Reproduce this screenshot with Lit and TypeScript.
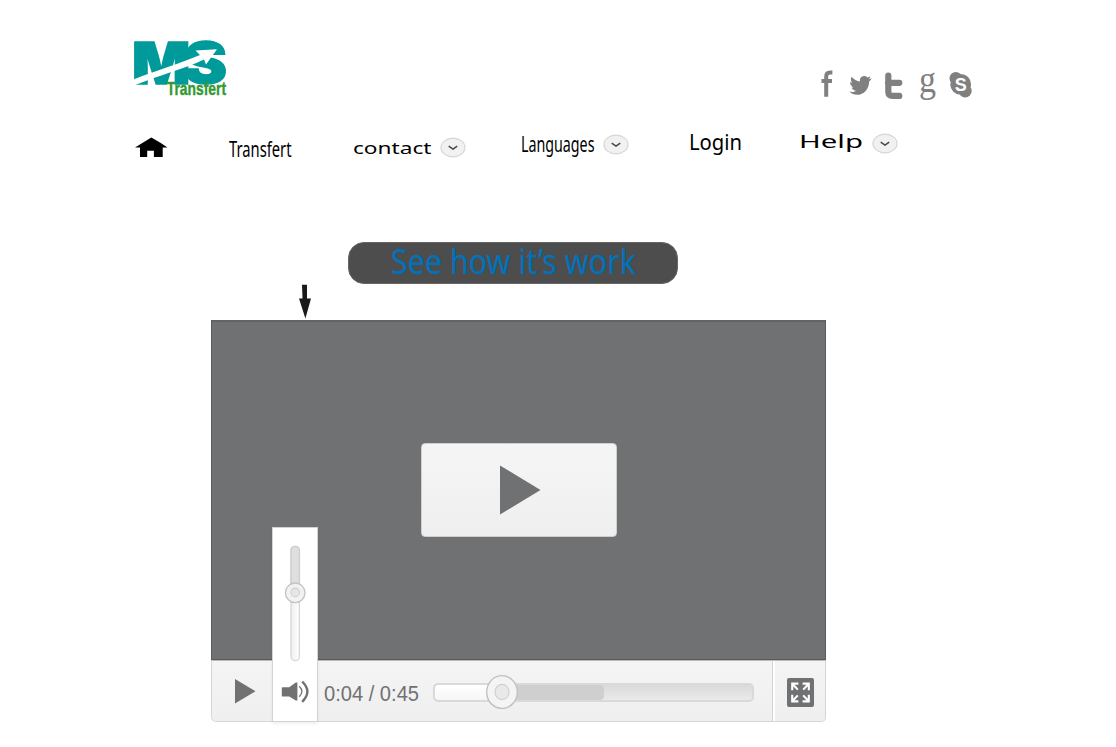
import { LitElement, html, css, svg } from "lit";
import { customElement, property } from "lit/decorators.js";

const chevron = html`<svg width="26" height="21" viewBox="0 0 26 21">
  <ellipse cx="13" cy="10.5" rx="12" ry="9.4" fill="#f1f1f1" stroke="#d6d6d6" stroke-width="1.2" />
  <path d="M8.7 9.2 L13 12.1 L17.2 9.2" fill="none" stroke="#444" stroke-width="1.4" />
</svg>`;

/** Text fitted to a given width, sitting on a given baseline. */
@customElement("fit-label")
class FitLabel extends LitElement {
  static styles = css`
    :host { display: block; }
    svg { display: block; overflow: visible; }
    text { font-family: var(--label-font, "Noto Sans", sans-serif); fill: currentColor; }
  `;
  @property() text = "";
  @property({ type: Number }) width = 60;
  @property({ type: Number }) height = 35;
  @property({ type: Number }) size = 22;
  @property({ type: Number }) baseline = 22;
  render() {
    return html`<svg width=${this.width} height=${this.height}>
      <text x="0" y=${this.baseline} font-size=${this.size} textLength=${this.width}
        lengthAdjust="spacingAndGlyphs">${this.text}</text>
    </svg>`;
  }
}

@customElement("brand-logo")
class BrandLogo extends LitElement {
  static styles = css`
    :host { display: block; }
    svg { display: block; overflow: visible; }
    .big { font-family: "Inter", "Liberation Sans", sans-serif; font-weight: 900; fill: #009a9a; stroke: #009a9a; stroke-width: 1.4; }
    .small { font-family: "Liberation Sans", sans-serif; font-weight: 700; fill: #339a33; stroke: #339a33; stroke-width: 0.4; }
  `;
  render() {
    return html`<svg width="100" height="64">
      <text class="big" x="2" y="48" font-size="57.5" textLength="58.5" lengthAdjust="spacingAndGlyphs">M</text>
      <text class="big" x="54" y="47.3" font-size="56" textLength="43" lengthAdjust="spacingAndGlyphs">S</text>
      <path d="M4 43.2 C28 34 50 27.5 70 19 L65.5 14.5 L87 13.3 L76 28.5 L74 23.5 C54 33 28 39.5 4 49.5 Z" fill="#fff" />
      <text class="small" x="36.8" y="59.2" font-size="17.8" textLength="59.2" lengthAdjust="spacingAndGlyphs">Transfert</text>
    </svg>`;
  }
}

@customElement("social-links")
class SocialLinks extends LitElement {
  static styles = css`
    :host { display: block; }
    svg { display: block; overflow: visible; }
    .serif { font-family: "Liberation Serif", serif; }
    .s { font-family: "Liberation Sans", sans-serif; font-weight: 700; fill: #fff; }
  `;
  render() {
    return html`<svg width="160" height="40" fill="#808080">
      <path d="M10.2 32.7 V12.5 Q10.2 8.4 14 8.4 H16.4 M5.5 17 H16" fill="none" stroke="#808080" stroke-width="4" />
      <path d="M33 27.3 C36 28.2 38 27.6 39.4 26.4 C36.8 26 35.7 24.8 35.2 23.2 L37 23.1 C34.6 21.8 33.6 20 33.7 17.7 L35.8 18.4 C34.2 16.5 34.2 14.2 35.1 12.4 C37.5 15.1 40.3 16.8 43.6 17.2 C43.1 14.2 44.7 12 47.6 11.8 C49 11.7 50.1 12.4 51 13.2 L54 12.1 C53.7 13.4 53 14.3 52.2 14.9 L55.2 14.2 C54.6 15.4 53.7 16.4 52.7 17.1 C52.7 24.6 47.6 30.5 40.6 30.5 C37.8 30.5 35 29.5 33 27.3 Z" transform="translate(.4 .3)" />
      <path d="M72.3 11.5 V27.5 Q72.3 31.9 76.5 31.9 H83.3 M72 18.8 H83.3" fill="none" stroke="#808080" stroke-width="6.2" stroke-linecap="round" />
      <text class="serif" x="103" y="28" font-size="38" textLength="17" lengthAdjust="spacingAndGlyphs">g</text>
      <circle cx="144.7" cy="20.4" r="10.4" />
      <circle cx="139.8" cy="14.3" r="6.3" />
      <circle cx="149.2" cy="27" r="6.5" />
      <text class="s" x="138.7" y="27" font-size="18.5" textLength="12" lengthAdjust="spacingAndGlyphs">S</text>
    </svg>`;
  }
}

@customElement("video-player")
class VideoPlayer extends LitElement {
  @property({ type: Number }) played = 21;
  @property({ type: Number }) loaded = 53.6;
  static styles = css`
    :host { display: block; position: relative; width: 615px; }
    * { box-sizing: border-box; }
    svg { display: block; }
    .screen { height: 340px; display: flex; align-items: center; justify-content: center; background: #707173; border: 1px solid #5a5b5d; border-top: 2px solid #626365; border-bottom: 1px solid #58595b; }
    .big-play { width: 196px; height: 94px; margin: 0 0 2px; background: linear-gradient(#f5f5f5, #efefef); border: 1px solid #cfcfcf; border-radius: 4px; display: flex; align-items: center; padding-left: 78px; }
    .bar { height: 62px; display: flex; align-items: center; background: linear-gradient(#f4f4f4, #efefef); border: 1px solid #d6d6d6; border-top-color: #bbb; border-radius: 0 0 5px 5px; padding-left: 23px; }
    .time { margin-left: 67.5px; color: #707173; --label-font: "Liberation Sans", sans-serif; }
    .track { position: relative; flex: none; width: 321px; height: 19px; margin: 3px 18px 0 14px; border: 2px solid #d9d9d9; border-radius: 5px; background: linear-gradient(#dadada, #eaeaea); }
    .loaded { height: 15px; background: #cfcfcf; border-radius: 0 4px 4px 0; }
    .played { height: 15px; background: linear-gradient(#fff, #f6f6f6); border-radius: 3px 0 0 3px; }
    .knob { position: absolute; left: 50px; top: -11px; overflow: visible; }
    .full { align-self: stretch; flex: 1; border-left: 1px solid #d3d3d3; box-shadow: inset 2px 0 #fff; display: flex; align-items: center; padding: 2px 0 0 14px; }
    .volume { position: absolute; left: 61px; top: 207px; width: 46px; height: 195px; background: #fff; border: 1px solid #d3d3d3; box-shadow: 0 2px 3px rgba(0,0,0,.06); }
  `;
  render() {
    return html`
      <div class="screen">
        <div class="big-play">
          <svg width="42" height="50"><path d="M0 .5 L40.5 25 L0 49.5 Z" fill="#707173" /></svg>
        </div>
      </div>
      <div class="bar">
        <svg width="21" height="25"><path d="M0 0 L20.5 12.3 L0 24.5 Z" fill="#707173" /></svg>
        <fit-label class="time" text="0:04 / 0:45" width="95" height="24" size="22.8" baseline="21.8"></fit-label>
        <div class="track">
          <div class="loaded" style="width:${this.loaded}%">
            <div class="played" style="width:${(this.played / this.loaded) * 100}%"></div>
          </div>
          <svg class="knob" width="34" height="38">
            <circle cx="17" cy="19.2" r="16" fill="#c9c9c9" opacity=".6" />
            <ellipse cx="17" cy="18" rx="15.3" ry="16.3" fill="#f4f4f4" stroke="#c1c1c1" stroke-width="1.3" />
            <ellipse cx="17" cy="18" rx="7" ry="7.6" fill="#e9e9e9" stroke="#d0d0d0" stroke-width="1.2" />
          </svg>
        </div>
        <div class="full">
          <svg width="27" height="29" viewBox="0 0 27 29">
            <rect width="27" height="29" rx="2" fill="#707173" />
            ${[0, 1, 2, 3].map((i) => svg`<g transform="translate(13.5 14.5) scale(${i % 2 ? 1 : -1} ${i < 2 ? -1 : 1})">
              <path d="M8.3 2.2 V8.9 H2.1 M7.8 8.3 L2.7 2.9" fill="none" stroke="#fff" stroke-width="2.1" />
            </g>`)}
          </svg>
        </div>
      </div>
      <div class="volume">
        <svg width="44" height="192">
          <defs>
            <linearGradient id="low"><stop stop-color="#efefef" /><stop offset="1" stop-color="#fff" /></linearGradient>
          </defs>
          <rect x="18" y="18.3" width="8.4" height="114.4" rx="4.2" fill="url(#low)" stroke="#d8d8d8" stroke-width="1.3" />
          <path d="M18 64 V22.5 A4.2 4.2 0 0 1 26.4 22.5 V64 Z" fill="#dfdfdf" stroke="#cdcdcd" stroke-width="1.3" />
          <circle cx="22.2" cy="64.8" r="9.8" fill="#f2f2f2" stroke="#c4c4c4" stroke-width="1.4" />
          <circle cx="22.2" cy="64.4" r="4.3" fill="#e6e6e6" stroke="#d0d0d0" stroke-width="1.1" />
          <g transform="translate(1.2 0)">
            <path d="M8.4 159.2 H15 L21.6 154.6 H23.2 V172.4 H21.6 L15 168.6 H8.4 Q7.6 168.6 7.6 167.6 V160.2 Q7.6 159.2 8.4 159.2 Z" fill="#707173" />
            <path d="M25 158.3 Q30.4 163.5 25 168.8" fill="none" stroke="#707173" stroke-width="1.3" />
            <path d="M28 153.6 Q38.4 163.4 28 173.8" fill="none" stroke="#707173" stroke-width="2.4" />
          </g>
        </svg>
      </div>`;
  }
}

@customElement("app-root")
class AppRoot extends LitElement {
  static styles = css`
    :host { display: block; width: 1116px; height: 747px; background: #fff; overflow: hidden; color: #000; }
    * { box-sizing: border-box; }
    svg { display: block; }
    header { display: flex; justify-content: space-between; align-items: flex-start; height: 130px; padding: 36px 140px 0 130px; }
    social-links { margin-top: 28px; }
    nav { display: flex; align-items: flex-start; height: 112px; padding-left: 135px; }
    .home { margin: 7px 61px 0 0; }
    .item { display: flex; }
    .contact { margin-left: 61px; }
    .contact svg { margin: 7px 0 0 8.5px; }
    .languages { margin-left: 55.5px; }
    .languages svg { margin: 4px 0 0 8.5px; }
    .login { margin-left: 59.5px; }
    .help { margin-left: 57.5px; }
    .help svg { margin: 3px 0 0 8.5px; }
    .banner { width: 329.5px; height: 41.5px; margin: 0 0 .5px 348px; padding-left: 42px; border-radius: 16px; background: #4d4d4d; border: 1px solid #666; color: #0072bc; }
    .arrow { margin: 0 0 1px 299px; }
    video-player { margin-left: 211px; }
  `;
  render() {
    return html`
      <header><brand-logo></brand-logo><social-links></social-links></header>
      <nav>
        <svg class="home" width="33" height="21"><path d="M16.3 .5 L25 5.5 L32.5 10.5 H27.7 V20 H18.9 V13.8 H12.2 V20 H5 V10.5 H0 Z" fill="#000" /></svg>
        <fit-label text="Transfert" width="62.5" size="21.4" baseline="26.8"></fit-label>
        <div class="item contact">
          <fit-label text="contact" width="78.5" size="16" baseline="23.8"></fit-label>${chevron}
        </div>
        <div class="item languages">
          <fit-label text="Languages" width="73.5" size="22" baseline="22"></fit-label>${chevron}
        </div>
        <fit-label class="login" text="Login" width="53" size="22" baseline="20"></fit-label>
        <div class="item help">
          <fit-label text="Help" width="64" size="17.8" baseline="17.8"></fit-label>${chevron}
        </div>
      </nav>
      <div class="banner"><fit-label text="See how it’s work" width="245" height="39" size="34.5" baseline="31"></fit-label></div>
      <svg class="arrow" width="13" height="35"><path d="M3 .7 H8 V14.5 H12 L6.4 34.5 L0 14.5 H3.5 Z" fill="#1a1a1a" /></svg>
      <video-player></video-player>`;
  }
}
